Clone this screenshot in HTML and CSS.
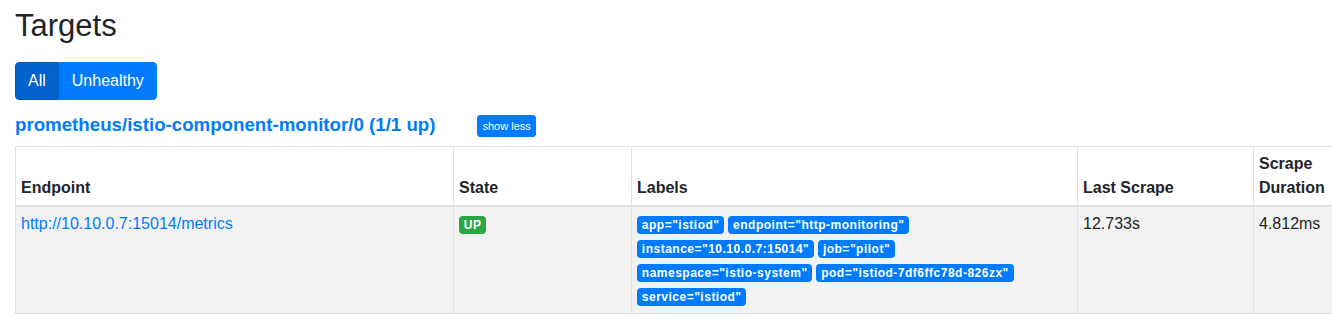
FILE: index.html
```html
<!DOCTYPE html>
<html lang="en">
<head>
    <meta charset="UTF-8">
    <meta name="viewport" content="width=device-width, initial-scale=1.0">
    <title>Targets</title>
    <link rel="stylesheet" href="styles.css">
</head>
<body>
    <div class="container">
        <h2 class="title">Targets</h2>
        <div class="btn-group">
            <button class="btn btn-active">All</button>
            <button class="btn">Unhealthy</button>
        </div>
        <div class="pool-head">
            <a class="pool-name" href="#pool-istio">prometheus/istio-component-monitor/0 (1/1 up)</a>
            <button class="btn-xs">show less</button>
        </div>
        <table class="targets">
            <colgroup>
                <col class="col-endpoint">
                <col class="col-state">
                <col class="col-labels">
                <col class="col-last">
                <col class="col-duration">
            </colgroup>
            <thead>
                <tr>
                    <th>Endpoint</th>
                    <th>State</th>
                    <th>Labels</th>
                    <th>Last Scrape</th>
                    <th>Scrape Duration</th>
                </tr>
            </thead>
            <tbody>
                <tr>
                    <td><a href="#metrics">http://10.10.0.7:15014/metrics</a></td>
                    <td><span class="badge badge-up">UP</span></td>
                    <td><span class="badge">app="istiod"</span><span class="badge">endpoint="http-monitoring"</span><span class="badge">instance="10.10.0.7:15014"</span><span class="badge">job="pilot"</span><span class="badge">namespace="istio-system"</span><span class="badge">pod="istiod-7df6ffc78d-826zx"</span><span class="badge">service="istiod"</span></td>
                    <td>12.733s</td>
                    <td>4.812ms</td>
                </tr>
            </tbody>
        </table>
    </div>
</body>
</html>
```

FILE: styles.css
```css
body {
    margin: 0;
    font-family: "Liberation Sans", Arial, sans-serif;
    font-size: 16px;
    line-height: 1.5;
    color: #212529;
    background: #fff;
    overflow: hidden;
}
a {
    color: #007bff;
    text-decoration: none;
}
.container {
    padding-left: 15px;
}
.title {
    font-size: 31px;
    font-weight: 400;
    line-height: 36px;
    margin: 8px 0 18px;
}
.btn-group {
    display: flex;
}
.btn {
    font-family: inherit;
    font-size: 16px;
    line-height: 24px;
    padding: 6px 12px;
    color: #fff;
    background-color: #007bff;
    border: 1px solid #007bff;
    border-radius: 0;
    cursor: pointer;
}
.btn:first-child {
    border-radius: 4px 0 0 4px;
}
.btn:last-child {
    border-radius: 0 4px 4px 0;
}
.btn-active {
    background-color: #0062cc;
    border-color: #005cbf;
}
.pool-head {
    display: flex;
    align-items: flex-start;
    margin-top: 15px;
    height: 22px;
}
.pool-name {
    font-size: 18.7px;
    font-weight: 700;
    line-height: 19px;
}
.btn-xs {
    margin-left: 42px;
    font-family: inherit;
    font-size: 11px;
    line-height: 16px;
    padding: 2px 4px;
    color: #fff;
    background-color: #007bff;
    border: 1px solid #007bff;
    border-radius: 3px;
    cursor: pointer;
}
.targets {
    margin-top: 9px;
    width: 1320px;
    table-layout: fixed;
    border-collapse: collapse;
}
.col-endpoint { width: 438px; }
.col-state { width: 178px; }
.col-labels { width: 446px; }
.col-last { width: 176px; }
.col-duration { width: 82px; }
.targets th,
.targets td {
    border: 1px solid #dee2e6;
    padding: 5px;
    text-align: left;
    vertical-align: top;
}
.targets th {
    vertical-align: bottom;
    font-weight: 700;
    border-bottom-width: 2px;
}
.targets tbody tr:nth-of-type(odd) {
    background-color: #f2f2f2;
}
.badge {
    display: inline-block;
    margin-right: 4px;
    padding: 3px 4.8px;
    font-size: 12px;
    font-weight: 700;
    line-height: 1;
    letter-spacing: 0.5px;
    color: #fff;
    background-color: #007bff;
    border-radius: 4px;
    white-space: nowrap;
}
.badge-up {
    background-color: #28a745;
}
```
